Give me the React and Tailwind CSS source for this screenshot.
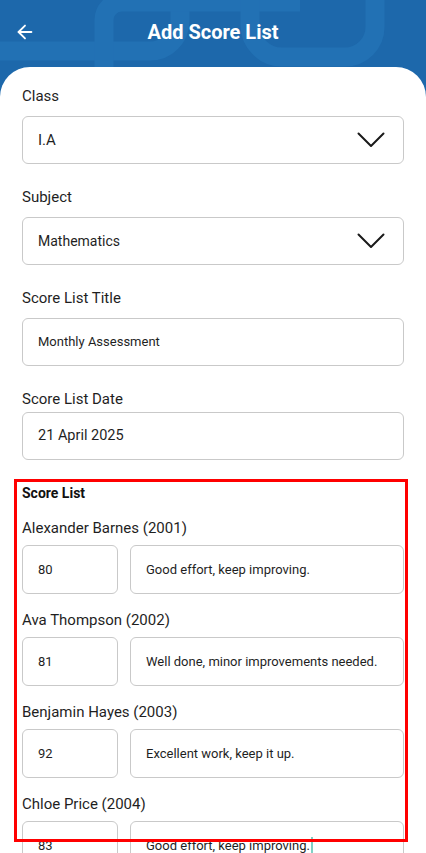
import { ArrowLeft } from "lucide-react";

const students = [
  { name: "Alexander Barnes (2001)", score: "80", note: "Good effort, keep improving." },
  { name: "Ava Thompson (2002)", score: "81", note: "Well done, minor improvements needed." },
  { name: "Benjamin Hayes (2003)", score: "92", note: "Excellent work, keep it up." },
  { name: "Chloe Price (2004)", score: "83", note: "Good effort, keep improving.", caret: true },
];

const Chevron = () => (
  <svg width="28" height="16" viewBox="0 0 28 16" fill="none">
    <path d="M1.5 1.5 L14 14 L26.5 1.5" stroke="#1a1a1a" strokeWidth="2" strokeLinecap="round" strokeLinejoin="round" />
  </svg>
);

const Field = ({ label, mt, boxMt, children, select, size = "text-[15px]" }) => (
  <div className={mt}>
    <div className="text-[15px] leading-[18px] text-[#1f1f1f]">{label}</div>
    <div
      className={`${boxMt} h-[48px] rounded-md border border-[#c9c9c9] flex items-center justify-between pl-[15px] pr-[18px] ${size} text-[#1f1f1f]`}
    >
      <span>{children}</span>
      {select && <Chevron />}
    </div>
  </div>
);

const HeaderPattern = () => (
  <svg className="absolute inset-0" width="426" height="90" viewBox="0 0 426 90" fill="none">
    <g stroke="#2271b4" strokeWidth="19">
      <path d="M0 51 H150 a30 30 0 0 0 30 -30 V-30" />
      <path d="M104 90 V20 a18 18 0 0 1 18 -18 H300" />
      <path d="M250 -10 V25 a32 32 0 0 0 32 32 H345 a30 30 0 0 0 30 -30 V-10" />
    </g>
  </svg>
);

const App = () => {
  return (
    <div
      className="relative w-[426px] h-[853px] overflow-hidden bg-[#1d68ab]"
      style={{ fontFamily: "Roboto, 'Noto Sans', sans-serif" }}
    >
      <HeaderPattern />
      <div className="relative h-[67px] flex items-center px-[14px] pb-[4px]">
        <ArrowLeft size={22} color="#ffffff" strokeWidth={2} />
        <div className="flex-1 text-center text-white font-bold text-[20px] pr-[22px] leading-[24px]">
          Add Score List
        </div>
      </div>

      <div className="relative bg-white rounded-t-[30px] px-[22px] pt-[20px] h-[790px]">
        <Field label="Class" boxMt="mt-[11px]" select>
          I.A
        </Field>
        <Field label="Subject" mt="mt-[24px]" boxMt="mt-[11px]" select size="text-[14px]">
          Mathematics
        </Field>
        <Field label="Score List Title" mt="mt-[24px]" boxMt="mt-[11px]" size="text-[13px]">
          Monthly Assessment
        </Field>
        <Field label="Score List Date" mt="mt-[24px]" boxMt="mt-[4px]" size="text-[14.5px]">
          21 April 2025
        </Field>

        <div className="mt-[24px] text-[14px] leading-[18px] font-bold text-[#111]">Score List</div>

        {students.map((s) => (
          <div key={s.name} className="mt-[17px]">
            <div className="text-[15px] leading-[18px] text-[#1f1f1f]">{s.name}</div>
            <div className="mt-[8px] flex gap-[12px]">
              <div className="w-[96px] h-[49px] rounded-md border border-[#c9c9c9] flex items-center pl-[15px] text-[13px] text-[#1f1f1f]">
                {s.score}
              </div>
              <div className="flex-1 h-[49px] rounded-md border border-[#c9c9c9] flex items-center pl-[15px] text-[13px] text-[#1f1f1f]">
                {s.note}
                {s.caret && <span className="ml-[1px] w-[2px] h-[18px] bg-[#7fcfc4]" />}
              </div>
            </div>
          </div>
        ))}
      </div>

      <div className="absolute left-[14px] top-[479px] w-[394px] h-[363px] border-[3px] border-[#ff0000] pointer-events-none" />
    </div>
  );
};

export default App;
